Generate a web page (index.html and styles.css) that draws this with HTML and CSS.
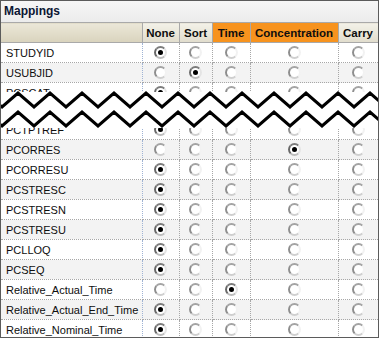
FILE: index.html
```html
<!DOCTYPE html>
<html lang="en">
<head>
    <meta charset="UTF-8" />
    <title>Mappings</title>
    <link rel="stylesheet" href="styles.css">
</head>
<body>
    <div class="panel">
        <div class="title">Mappings</div>

        <table class="grid">
            <colgroup>
                <col class="c-name">
                <col class="c-none">
                <col class="c-sort">
                <col class="c-time">
                <col class="c-conc">
                <col class="c-carry">
            </colgroup>
            <thead>
                <tr>
                    <th class="name-head"></th>
                    <th>None</th>
                    <th>Sort</th>
                    <th class="hot">Time</th>
                    <th class="hot">Concentration</th>
                    <th>Carry</th>
                </tr>
            </thead>
            <tbody id="rows"></tbody>
        </table>

        <!-- break marker: rows skipped between PCSCAT and PCTPTREF -->
        <svg class="cut" width="379" height="38" viewBox="0 0 379 38">
            <rect x="0" y="2" width="379" height="36" fill="#fff" />
            <polyline fill="none" stroke="#000" stroke-width="3" stroke-linejoin="miter"
                points="-14,3 2,17 18,3 34,17 50,3 66,17 82,3 98,17 114,3 130,17 146,3 162,17 178,3 194,17 210,3 226,17 242,3 258,17 274,3 290,17 306,3 322,17 338,3 354,17 370,3 386,17 402,3" />
            <polyline fill="none" stroke="#000" stroke-width="3" stroke-linejoin="miter"
                points="-14,22 2,36 18,22 34,36 50,22 66,36 82,22 98,36 114,22 130,36 146,22 162,36 178,22 194,36 210,22 226,36 242,22 258,36 274,22 290,36 306,22 322,36 338,22 354,36 370,22 386,36 402,22" />
        </svg>
    </div>

    <script>
        // 0 None, 1 Sort, 2 Time, 3 Concentration, 4 Carry
        const mappings = [
            ["STUDYID", 0],
            ["USUBJID", 1],
            ["PCSCAT", 0],
            [null, -1],
            ["PCTPTREF", 0],
            ["PCORRES", 3],
            ["PCORRESU", 0],
            ["PCSTRESC", 0],
            ["PCSTRESN", 0],
            ["PCSTRESU", 0],
            ["PCLLOQ", 0],
            ["PCSEQ", 0],
            ["Relative_Actual_Time", 2],
            ["Relative_Actual_End_Time", 0],
            ["Relative_Nominal_Time", 0],
        ];

        const body = document.getElementById("rows");

        mappings.forEach(([name, picked], i) => {
            const tr = document.createElement("tr");
            tr.className = i % 2 ? "alt" : "";
            if (name === null) tr.classList.add("gap");

            const nameCell = document.createElement("td");
            nameCell.className = "name";
            nameCell.textContent = name || "";
            tr.appendChild(nameCell);

            for (let c = 0; c < 5; c++) {
                const td = document.createElement("td");
                td.className = "opt";
                const radio = document.createElement("span");
                radio.className = c === picked ? "radio on" : "radio";
                td.appendChild(radio);
                tr.appendChild(td);
            }

            body.appendChild(tr);
        });
    </script>
</body>
</html>
```

FILE: styles.css
```css
body {
    margin: 0;
    padding: 0;
    background-color: #ffffff;
    font-family: "Liberation Sans", Arial, sans-serif;
}

.panel {
    position: relative;
    width: 379px;
    height: 338px;
    box-sizing: border-box;
    border: 1px solid #5b5b5b;
    overflow: hidden;
    background-color: #ffffff;
}

.title {
    height: 21px;
    line-height: 20px;
    padding-left: 3px;
    font-size: 12px;
    font-weight: bold;
    color: #0b1633;
    background: linear-gradient(#f6f6f6, #ececec);
}

.grid {
    border-collapse: collapse;
    table-layout: fixed;
    width: 377px;
    font-size: 11px;
}

.c-name { width: 141px; }
.c-none { width: 37px; }
.c-sort { width: 33px; }
.c-time { width: 38px; }
.c-conc { width: 88px; }
.c-carry { width: 40px; }

.grid th {
    height: 19px;
    padding: 0;
    border: 1px solid #a9a9a9;
    font-size: 11.5px;
    font-weight: bold;
    color: #0e0e0e;
    text-align: center;
    background: linear-gradient(#f3f1e8, #e1ddcd);
}

    .grid th.name-head {
        border-left: none;
        background: linear-gradient(#ebe7d8, #d9d3bd);
    }

    .grid th.hot {
        background: #f7931e;
    }

.grid td {
    height: 19px;
    padding: 0;
    border-right: 1px dotted #a7a7a7;
    border-bottom: 1px dotted #a7a7a7;
}

.grid tr.alt td {
    background-color: #f3f3f3;
}

.grid tr.gap td {
    height: 16px;
}

.grid td.name {
    padding-left: 5px;
    color: #0e0e0e;
    white-space: nowrap;
    overflow: hidden;
    border-right: 1px dotted #9fb3d4;
}

.grid td.opt {
    text-align: center;
    line-height: 0;
}

.grid td:last-child {
    border-right: none;
}

.radio {
    display: inline-block;
    position: relative;
    width: 13px;
    height: 13px;
    box-sizing: border-box;
    border-radius: 50%;
    border: 2px solid;
    border-color: #a4a4a4 #f2f2f2 #cfcfcf #8e8e8e;
    background-color: #ffffff;
    vertical-align: middle;
}

    .radio.on {
        border-color: #7c7c7c #e4e4e4 #bdbdbd #686868;
    }

        .radio.on::after {
            content: "";
            position: absolute;
            left: 2px;
            top: 2px;
            width: 5px;
            height: 5px;
            border-radius: 50%;
            background-color: #000000;
        }

.cut {
    position: absolute;
    left: -1px;
    top: 89px;
}
```
